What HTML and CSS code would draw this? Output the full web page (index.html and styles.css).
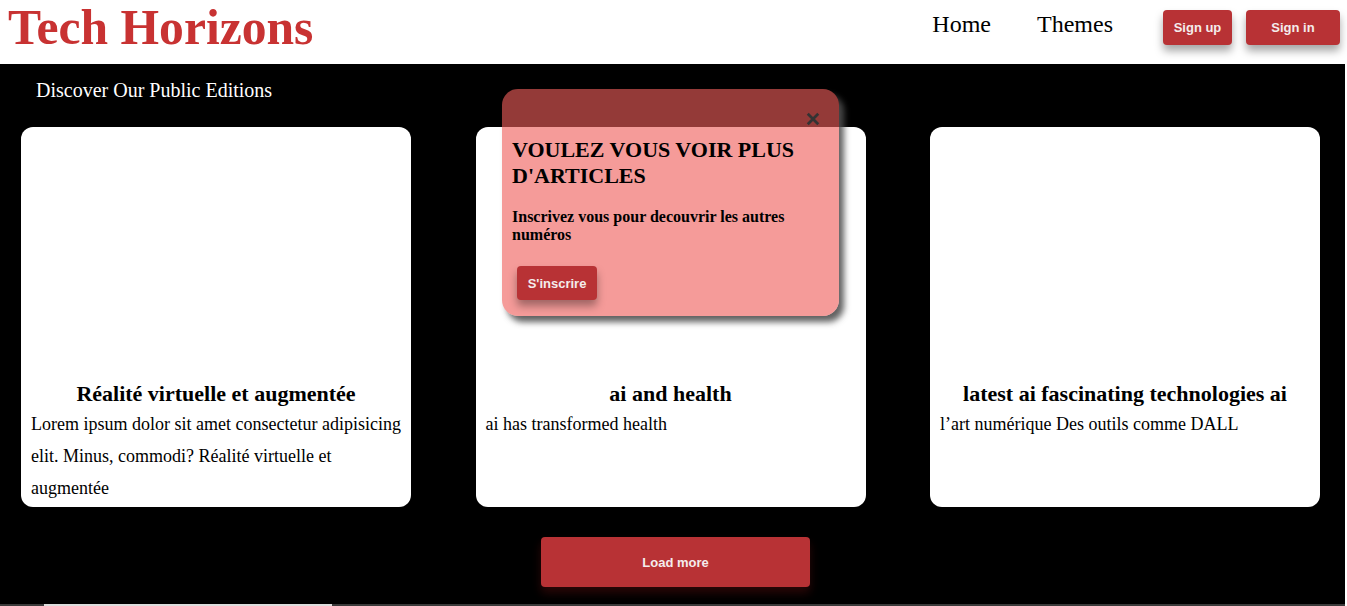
FILE: index.html
```html
<!DOCTYPE html>
<html lang="fr">
<head>
<meta charset="utf-8">
<title>Tech Horizons</title>
<link rel="stylesheet" href="styles.css">
</head>
<body>
<header class="topbar">
  <h1 class="brand">Tech Horizons</h1>
  <nav class="nav">
    <a class="nav-link" href="#">Home</a>
    <a class="nav-link" href="#">Themes</a>
  </nav>
  <div class="auth">
    <button class="btn btn-small btn-signup">Sign up</button>
    <button class="btn btn-small btn-signin">Sign in</button>
  </div>
</header>

<main class="editions">
  <h2 class="editions-title">Discover Our Public Editions</h2>
  <div class="cards">
    <article class="card">
      <div class="card-media"></div>
      <h3 class="card-title">Réalité virtuelle et augmentée</h3>
      <p class="card-text">Lorem ipsum dolor sit amet consectetur adipisicing elit. Minus, commodi? Réalité virtuelle et augmentée</p>
    </article>
    <article class="card">
      <div class="card-media"></div>
      <h3 class="card-title">ai and health</h3>
      <p class="card-text">ai has transformed health</p>
    </article>
    <article class="card">
      <div class="card-media"></div>
      <h3 class="card-title">latest ai fascinating technologies ai</h3>
      <p class="card-text">l’art numérique Des outils comme DALL</p>
    </article>
  </div>
  <div class="more">
    <button class="btn btn-load">Load more</button>
  </div>

  <div class="popup">
    <svg class="popup-close" width="16" height="16" viewBox="0 0 16 16" aria-label="Fermer">
      <path d="M2 2 L14 14 M14 2 L2 14" stroke="#333" stroke-width="3.2" stroke-linecap="butt" fill="none"/>
    </svg>
    <h2 class="popup-title">VOULEZ VOUS VOIR PLUS D'ARTICLES</h2>
    <p class="popup-text">Inscrivez vous pour decouvrir les autres numéros</p>
    <button class="btn btn-small btn-popup">S'inscrire</button>
  </div>
</main>
<div class="next">
  <div class="next-bar"></div>
</div>
</body>
</html>
```

FILE: styles.css
```css
html, body {
  margin: 0;
  padding: 0;
  background: #ffffff;
  font-family: "Liberation Serif", "Times New Roman", serif;
  overflow: hidden;
}

.topbar {
  height: 64px;
  display: flex;
  align-items: flex-start;
  padding: 0 5px 0 8px;
  box-sizing: border-box;
  margin-right: 2px;
}

.brand {
  margin: 0;
  font-size: 49.6px;
  line-height: 56px;
  font-weight: bold;
  color: #c83232;
}

.nav {
  margin-left: auto;
  display: flex;
  gap: 46px;
  margin-top: 10px;
}

.nav-link {
  color: #000;
  text-decoration: none;
  font-size: 24px;
  line-height: 28px;
}

.auth {
  display: flex;
  gap: 14px;
  margin-left: 50px;
  margin-top: 10px;
}

.btn {
  border: none;
  background: #b83235;
  color: #f4ecec;
  font-family: "Liberation Sans", Arial, sans-serif;
  font-weight: bold;
  cursor: pointer;
}

.btn-small {
  height: 35px;
  font-size: 13px;
  border-radius: 4px;
  box-shadow: 0 6px 8px rgba(0, 0, 0, 0.35);
}

.btn-signup {
  width: 69px;
}

.btn-signin {
  width: 94px;
}

.editions {
  position: relative;
  background: #000;
  height: 540px;
  margin-right: 2px;
  padding-top: 15px;
  box-sizing: border-box;
}

.editions-title {
  margin: 0 0 25px 36px;
  color: #fff;
  font-size: 20px;
  font-weight: normal;
  line-height: 23px;
}

.cards {
  display: flex;
  gap: 64.5px;
  padding-left: 21px;
}

.card {
  width: 390px;
  height: 380px;
  background: #fff;
  border-radius: 12px;
  box-sizing: border-box;
  padding: 0 10px;
}

.card-media {
  height: 255px;
}

.card-title {
  margin: 0;
  text-align: center;
  font-size: 22px;
  line-height: 24px;
  font-weight: bold;
}

.card-text {
  margin: 2px 0 0 0;
  font-size: 18px;
  line-height: 32px;
  color: #000;
}

.more {
  display: flex;
  justify-content: center;
  padding-left: 6px;
  margin-top: 30px;
}

.btn-load {
  width: 269px;
  height: 50px;
  font-size: 13px;
  border-radius: 4px;
  box-shadow: 0 6px 10px rgba(120, 20, 20, 0.35);
}

.popup {
  position: absolute;
  left: 502px;
  top: 25px;
  width: 337px;
  height: 227px;
  box-sizing: border-box;
  padding: 48px 10px 0 10px;
  background: rgba(239, 94, 90, 0.62);
  border-radius: 16px;
  box-shadow: 5px 6px 6px rgba(80, 80, 80, 0.9);
}

.popup-close {
  position: absolute;
  left: 304px;
  top: 23px;
  width: 14px;
  height: 14px;
}

.popup-title {
  margin: 0;
  font-size: 22px;
  line-height: 26px;
  font-weight: bold;
  color: #000;
}

.popup-text {
  margin: 19px 0 0 0;
  font-size: 16px;
  line-height: 18px;
  font-weight: bold;
  color: #000;
}

.btn-popup {
  display: block;
  margin: 22px 0 0 5px;
  width: 80px;
  height: 34px;
  font-size: 13px;
}

.next {
  height: 40px;
  background: #3a3a3a;
  margin-right: 2px;
  padding-left: 44px;
}

.next-bar {
  width: 288px;
  height: 40px;
  background: #ddd;
}
```
